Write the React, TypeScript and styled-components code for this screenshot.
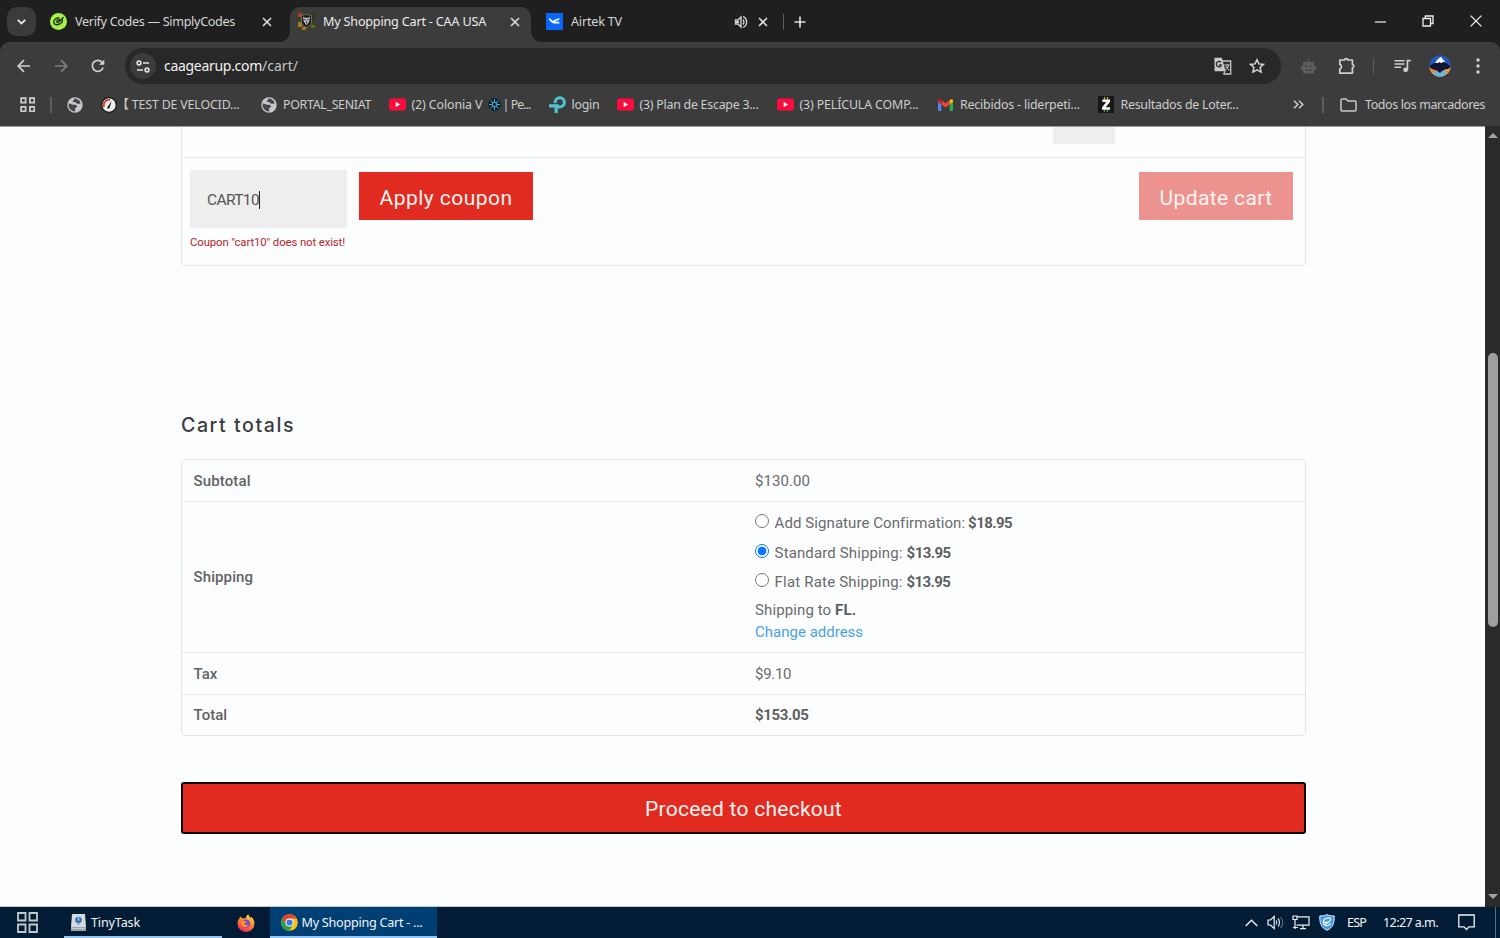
import React, { useLayoutEffect, useRef, useState } from "react";
import styled, { createGlobalStyle, css } from "styled-components";

const ui = `"Noto Sans", "Open Sans", "Noto Sans CJK JP", sans-serif`;
const body = `Roboto, "Liberation Sans", sans-serif`;

const GlobalStyle = createGlobalStyle`
  * { box-sizing: border-box; }
  body { margin: 0; background: #1f1f1f; overflow: hidden; }
  svg { display: block; flex: none; }
`;

const Screen = styled.div`
  width: 1500px;
  height: 938px;
  display: flex;
  flex-direction: column;
  overflow: hidden;
  font-family: ${ui};
  font-size: 13px;
  color: #dedede;
`;

/* Text tracked to fill a given width */
const Tracked = styled.span<{ $w: number }>`
  display: block;
  flex: none;
  width: ${(p) => p.$w}px;
  white-space: pre;
`;

function Fit({ w, children }: { w: number; children: string }) {
  const ref = useRef<HTMLSpanElement>(null);
  const [spacing, setSpacing] = useState(0);
  useLayoutEffect(() => {
    if (!ref.current) return;
    const natural = ref.current.getBoundingClientRect().width;
    setSpacing((w - natural) / children.length);
  }, [w, children]);
  return (
    <Tracked $w={w} style={{ letterSpacing: spacing }}>
      <span ref={ref}>{children}</span>
    </Tracked>
  );
}

/* ---------- Tab strip ---------- */
const TabStrip = styled.header`
  height: 42px;
  flex: none;
  display: flex;
  align-items: flex-end;
  background: #1f1f1f;
`;
const TabSearch = styled.button`
  width: 29px;
  height: 29px;
  margin: 0 6px 6px 7px;
  padding: 0;
  border: 0;
  border-radius: 10px;
  background: #3b3b3b;
  display: grid;
  place-items: center;
`;
const Tab = styled.div<{ $w: number; $left: number; $right: number; $active?: boolean }>`
  width: ${(p) => p.$w}px;
  height: 35px;
  flex: none;
  display: flex;
  align-items: center;
  padding: 0 ${(p) => p.$right}px 6px ${(p) => p.$left}px;
  gap: 8px;
  font-size: 12.6px;
  color: #d6d6d6;
  position: relative;
  ${(p) =>
    p.$active &&
    css`
      background: #3c3c3c;
      color: #ececec;
      border-radius: 10px 10px 0 0;
      &::before,
      &::after {
        content: "";
        position: absolute;
        bottom: 0;
        width: 10px;
        height: 10px;
      }
      &::before {
        left: -10px;
        background: radial-gradient(circle at 0 0, #1f1f1f 9.5px, #3c3c3c 10px);
      }
      &::after {
        right: -10px;
        background: radial-gradient(circle at 100% 0, #1f1f1f 9.5px, #3c3c3c 10px);
      }
    `}
`;
const Push = styled.span`
  flex: 1;
`;
const Divider = styled.span<{ $h: number }>`
  width: 1.5px;
  height: ${(p) => p.$h}px;
  background: #5d5d5d;
  flex: none;
`;
const NewTab = styled.div`
  display: flex;
  align-items: center;
  gap: 10px;
  height: 35px;
  padding: 0 0 6px 1.5px;
`;
const WindowControls = styled.div`
  margin-left: auto;
  align-self: stretch;
  display: flex;
`;
const Cell = styled.span<{ $w: number }>`
  width: ${(p) => p.$w}px;
  flex: none;
  display: grid;
  place-items: center;
`;

/* ---------- Toolbar ---------- */
const ToolbarBack = styled.div`
  background: #1f1f1f;
  flex: none;
`;
const Toolbar = styled.div`
  height: 42px;
  background: #3c3c3c;
  border-radius: 9px 9px 0 0;
  display: flex;
  align-items: center;
  padding: 6px 0 0 4px;
`;
const Omnibox = styled.div`
  width: 1156px;
  height: 36px;
  flex: none;
  margin: 0 8px;
  border-radius: 18px;
  background: #282828;
  display: flex;
  align-items: center;
  padding: 0 7px 0 5px;
  font-size: 14px;
  color: #f1f1f1;
`;
const SiteInfo = styled.span`
  width: 26px;
  height: 26px;
  border-radius: 50%;
  background: #3c3c3c;
  display: grid;
  place-items: center;
  margin-right: 8px;
`;
const Address = styled.span`
  display: flex;
  padding-bottom: 1px;
`;
const Dim = styled.span`
  color: #c4c4c4;
`;

/* ---------- Bookmarks ---------- */
const BookmarksBar = styled.nav`
  height: 42px;
  flex: none;
  display: flex;
  align-items: center;
  background: #3c3c3c;
  font-size: 12.4px;
  color: #cdcdcd;
  padding: 0 0 1px 19.5px;
`;
const Launcher = styled.span`
  width: 47.5px;
  flex: none;
  display: flex;
  align-items: center;
  gap: 15px;
`;
const Bookmark = styled.a<{ $w: number; $gap?: number }>`
  width: ${(p) => p.$w}px;
  flex: none;
  display: flex;
  align-items: center;
  gap: ${(p) => p.$gap ?? 6}px;
  line-height: 18px;
`;
const Split = styled.span`
  display: flex;
  align-items: center;
  gap: 2px;
`;

/* ---------- Page ---------- */
const Viewport = styled.div`
  height: 781px;
  flex: none;
  display: flex;
  background: #fcfdfe;
`;
const Page = styled.main`
  width: 1485px;
  height: 781px;
  padding-left: 181px;
  border-top: 1px solid #9c9c9c;
  border-bottom: 1px solid #c3c8cd;
  font-family: ${body};
  font-size: 15px;
  color: #6b6b6b;
`;
const CartTable = styled.section`
  width: 1125px;
  height: 139px;
  border: 1px solid #e3e4e7;
  border-top: 0;
  border-radius: 0 0 5px 5px;
`;
const ItemRow = styled.div`
  height: 31px;
  border-bottom: 1px solid #e5e6e8;
  padding: 0 0 0 870.5px;
`;
const Quantity = styled.div`
  width: 62.5px;
  height: 17px;
  background: #eeeeee;
`;
const CouponRow = styled.div`
  display: flex;
  align-items: flex-start;
  padding: 12px 12px 0 8px;
`;
const CouponField = styled.div`
  width: 157px;
  font-size: 11.4px;
  color: #b5262b;
`;
const CouponInput = styled.div`
  width: 156.5px;
  height: 58px;
  margin-bottom: 7px;
  padding: 1px 0 0 17px;
  display: flex;
  align-items: center;
  background: #eeeeee;
  font-size: 15.5px;
  color: #555;
`;
const Caret = styled.i`
  width: 1px;
  height: 18px;
  background: #222;
`;
const Button = styled.button<{ $w: number; $faded?: boolean }>`
  width: ${(p) => p.$w}px;
  height: 48px;
  flex: none;
  margin: 2px 0 0 12px;
  padding: 3px 0 0;
  border: 0;
  display: flex;
  align-items: center;
  justify-content: center;
  font-family: ${body};
  font-size: 21px;
  color: #fff3f0;
  background: ${(p) => (p.$faded ? "#ed938f" : "#e22b20")};
`;
const Title = styled.h2`
  margin: 146px 0 0;
  height: 47px;
  line-height: 26px;
  font-family: Inter, ${body};
  font-size: 19.6px;
  font-weight: 500;
  color: #3c3c3f;
`;
const Totals = styled.section`
  width: 1125px;
  height: 277px;
  border: 1px solid #e3e4e7;
  border-radius: 5px;
`;
const TotalsRow = styled.div<{ $h: number }>`
  height: ${(p) => p.$h}px;
  display: grid;
  grid-template-columns: 561.5px 1fr;
  align-items: center;
  padding: 0 0 0 11.6px;
  & + & {
    border-top: 1px solid #e6e7ea;
  }
`;
const Label = styled.div`
  font-weight: 500;
  color: #636363;
`;
const Strong = styled.b`
  font-weight: 700;
  color: #5f5f5f;
`;
const Methods = styled.div`
  display: flex;
  flex-direction: column;
  margin-bottom: 2px;
`;
const Method = styled.label`
  height: 29.2px;
  display: flex;
  align-items: center;
`;
const Radio = styled.span<{ $on?: boolean }>`
  width: 14px;
  height: 14px;
  margin: 0 5.5px 4px 0;
  flex: none;
  border-radius: 50%;
  border: 1px solid ${(p) => (p.$on ? "#0a75ff" : "#767676")};
  background: ${(p) => (p.$on ? "radial-gradient(circle, #0a75ff 4px, #fff 4.7px)" : "#fff")};
`;
const Destination = styled.div`
  margin-top: 3px;
`;
const Line = styled.div<{ $link?: boolean }>`
  height: 22px;
  display: flex;
  align-items: center;
  color: ${(p) => (p.$link ? "#4aa3df" : "inherit")};
`;
const Checkout = styled.button`
  width: 1125px;
  height: 52px;
  margin-top: 46px;
  padding: 1px 0 0;
  border: 2px solid #0c0505;
  border-radius: 3px;
  background: #e22b20;
  display: flex;
  align-items: center;
  justify-content: center;
  font-family: ${body};
  font-size: 21px;
  color: #fff3f0;
`;
const Scrollbar = styled.aside`
  width: 15px;
  background: #2b2b2b;
  display: flex;
  flex-direction: column;
  align-items: center;
  padding: 7px 0 8px 0;
`;
const Thumb = styled.div`
  width: 10px;
  height: 274px;
  margin: 215px 0 auto;
  border-radius: 5px;
  background: #9f9f9f;
`;

/* ---------- Taskbar ---------- */
const Taskbar = styled.footer`
  height: 31px;
  flex: none;
  display: flex;
  align-items: center;
  background: #021c35;
  color: #f2f5f8;
  font-size: 12.6px;
`;
const TaskItem = styled.div<{ $w: number; $active?: boolean }>`
  width: ${(p) => p.$w}px;
  height: 31px;
  flex: none;
  display: flex;
  align-items: center;
  gap: ${(p) => (p.$active ? 4 : 5)}px;
  padding: 2px 0 0 ${(p) => (p.$active ? 10.5 : 7)}px;
  background: ${(p) => (p.$active ? "#003f74" : "transparent")};
  border-bottom: 2px solid #93c6f0;
`;
const Tray = styled.div`
  margin-left: auto;
  height: 31px;
  display: flex;
  align-items: center;
`;
const ShowDesktop = styled.span`
  width: 5px;
  height: 31px;
  border-left: 1px solid #5b6d80;
`;

/* ---------- Icons ---------- */
const stroke = (c: string, w = 1.7) => ({ fill: "none", stroke: c, strokeWidth: w });

const Close = () => (
  <svg width="10" height="10" viewBox="0 0 10 10" {...stroke("#dcdcdc", 1.6)}><path d="M1 1l8 8M9 1L1 9" /></svg>
);
const SimplyIcon = () => (
  <svg width="17" height="17" viewBox="0 0 17 17">
    <circle cx="8.5" cy="8.5" r="8.5" fill="#a6f04e" />
    <path d="M9.6 5.100C6.500 4.500 3.600 6.700 3.700 9.200c.1 2.500 3.300 3.100 5.700 1.900 2.300-1.100 3.400-3.200 2.700-4.900M6.300 8.500l1.700 1.300 5.600-5.600M6.300 8.500c1-1.300 2.500-1.900 4-1.600" {...stroke("#1d3512", 1.4)} />
  </svg>
);
const ShieldIcon = () => (
  <svg width="17" height="17" viewBox="0 0 17 17">
    <path fill="#38401f" d="M0 0h17v17H0z" />
    <path fill="#b23a24" d="M0 0h4v4H0z" /><path fill="#a97424" d="M0 9h4v5H0zM4 14h4v3H4z" />
    <path fill="#253a1c" d="M12 1h5v5h-5z" /><path fill="#5b6830" d="M13 12h4v3h-4z" />
    <path d="M3.500 2.500l5-1 5 1v5.600c0 3-2 5.100-5 6.400-3-1.300-5-3.400-5-6.400z" fill="#17191b" stroke="#7d817c" strokeWidth=".8" />
    <path d="M5 3.500l2 1.300h3l2-1.300-.7 5-2.800 4-2.800-4z" fill="#b9bdbd" />
    <path d="M6.400 6.300l1.500.8M10.600 6.300l-1.500.8M8.500 8.300v2" {...stroke("#25282a", 1)} />
  </svg>
);
const AirtekIcon = () => (
  <svg width="17" height="17" viewBox="0 0 17 17">
    <path fill="#0867fa" d="M0 0h17v17H0z" />
    <path d="M3.300 5.700c1.700 1 2.200 3.600 4.500 3.900h5.500M6.500 8.700l6.800-2.900" {...stroke("#fff", 1.7)} />
  </svg>
);
const Speaker = () => (
  <svg width="14" height="14" viewBox="0 0 14 14">
    <path d="M1.500 5h2.500l3-3v10L4 9H1.500z" {...stroke("#cfcfcf", 1.4)} />
    <path d="M2 6h3v2H2z" fill="#cfcfcf" />
    <path d="M8.800 4.600c1.500 1 1.500 3.800 0 4.800M9 1.700c4.800 1.500 4.800 9.100 0 10.600" {...stroke("#cfcfcf", 1.4)} />
  </svg>
);
const Arrow = ({ c, flip }: { c: string; flip?: boolean }) => (
  <svg width="14" height="14" viewBox="0 0 14 14" {...stroke(c, 1.7)}>
    <path d={flip ? "M1 7h11.500M7 1.200L12.800 7 7 12.800" : "M13 7H1.500M7 1.200L1.200 7 7 12.800"} />
  </svg>
);
const Reload = () => (
  <svg width="14" height="14" viewBox="0 0 14 14">
    <path d="M12.100 8.500A5.500 5.500 0 1 1 11 3.200l1 1" {...stroke("#d0d0d0", 1.7)} />
    <path d="M13.300.5v5.300H8z" fill="#d0d0d0" />
  </svg>
);
const Tune = () => (
  <svg width="14" height="13" viewBox="0 0 14 13" {...stroke("#e0e0e0", 1.6)}>
    <circle cx="3" cy="3" r="1.900" /><path d="M7 3h6M1 10h6" /><circle cx="11" cy="10" r="1.900" />
  </svg>
);
const Translate = () => (
  <svg width="18" height="18" viewBox="0 0 18 18">
    <path d="M7.500 4h9.200v13H9.500" {...stroke("#c9c9c9", 1.3)} />
    <path d="M.5.800h7.300l3.900 13.400H.5z" fill="#c9c9c9" />
    <path d="M7 5.300a2.700 2.700 0 1 0 .2 3.500v-1H4.900" {...stroke("#282828", 1.3)} />
    <path d="M10.300 8h5.400M13 6.700V8M14.800 8c-.4 2-2 3.800-3.300 4.700M11.700 9.500l3.700 3.800M9.500 17l1.900-3" {...stroke("#c9c9c9", 1.1)} />
  </svg>
);
const Star = () => (
  <svg width="16" height="16" viewBox="0 0 16 16" {...stroke("#d4d4d4", 1.5)}>
    <path d="M8 1.700l1.900 4.200 4.600.5-3.400 3.100 1 4.600L8 11.800l-4.100 2.300 1-4.600L1.500 6.400l4.600-.5z" />
  </svg>
);
const Robot = () => (
  <svg width="17" height="17" viewBox="0 0 18 17">
    <path d="M8.300 0h1.400v3.500h3.500a1.800 1.800 0 0 1 1.700 1.800v2.500a2.600 2.600 0 0 1 1.900 4.200l-1.900.8v1.700a1.500 1.500 0 0 1-1.500 1.500H4.600a1.500 1.500 0 0 1-1.500-1.500v-1.700L1.200 12a2.600 2.600 0 0 1 1.900-4.200V5.300a1.800 1.800 0 0 1 1.700-1.800h3.500z" fill="#5d5d5d" />
    <path d="M5.500 7.300h1.800v1.800H5.500zM10.700 7.300h1.800v1.800h-1.800zM6 12h6v1.300H6z" fill="#424242" />
  </svg>
);
const Puzzle = () => (
  <svg width="18" height="18" viewBox="0 0 18 18" {...stroke("#cfcfcf", 1.7)} strokeLinejoin="round">
    <path d="M1.800 3h4.900c0-1.900 3.100-1.900 3.100 0h4.600v4.600c1.900 0 1.900 3.200 0 3.200v5.400H1.800v-4.300c2.200-.6 2.200-3.900 0-4.500z" />
  </svg>
);
const Queue = () => (
  <svg width="17" height="14" viewBox="0 0 17 14">
    <path d="M.500 1.700h10M.500 5h10M.500 8.300h6.500" {...stroke("#cfcfcf", 1.5)} />
    <path d="M12.700 1.700h4M13.400 1v10" {...stroke("#cfcfcf", 1.7)} /><circle cx="11.600" cy="10.800" r="2.400" fill="#cfcfcf" />
  </svg>
);
const Avatar = () => (
  <svg width="22" height="22" viewBox="0 0 22 22">
    <defs><clipPath id="avatar"><circle cx="11" cy="11" r="10.700" /></clipPath></defs>
    <g clipPath="url(#avatar)">
      <path fill="#2259bd" d="M0 0h22v22H0z" /><path fill="#eda550" d="M0 12h22v10H0z" />
      <path fill="#6bb4da" d="M5 17l5-2 6 1 2 6H3z" />
      <path fill="#111634" d="M0 11.500L5 8l6-2 6 1.500 5 4.500-3 2-3 .5-3 1.500-2 2-4-3-3 .5z" />
      <path fill="#fff" d="M5.500 8L10 3l2-1 4.500 5.500-2.500-.7-1.500 1.400-2-1.300L8.500 8.300 7 7.500z" />
      <path fill="#e8843d" d="M0 15l4-1 4 2.500-3 1.500zM16 17l5-2v3z" />
    </g>
  </svg>
);
const Dots = () => (
  <svg width="4" height="16" viewBox="0 0 4 16" fill="#d2d2d2"><circle cx="2" cy="2" r="1.700" /><circle cx="2" cy="8" r="1.700" /><circle cx="2" cy="14" r="1.700" /></svg>
);
const Apps = () => (
  <svg width="15.500" height="15.500" viewBox="0 0 16 16" {...stroke("#cdcdcd", 1.8)}><path d="M1.200 1.200h4.600v4.600H1.200zM10.200 1.200h4.600v4.600h-4.600zM1.200 10.200h4.600v4.600H1.200zM10.200 10.200h4.600v4.600h-4.600z" /></svg>
);
const StartGrid = () => (
  <svg width="21" height="21" viewBox="0 0 21 21" {...stroke("#c3c8cd", 1.8)}><path d="M1 1h7.500v7.500H1zM12.500 1H20v7.500h-7.500zM1 12.500h7.500V20H1zM12.500 12.500H20V20h-7.500z" /></svg>
);
const Globe = () => (
  <svg width="16" height="16" viewBox="0 0 16 16">
    <circle cx="8" cy="8" r="7.700" fill="#c5c7cb" />
    <path d="M2 6.200l3.700 1.600h3l1.600 1.700-2.200 1.700v3.200C4.400 14.400 1.600 11.400 1.600 8zM7 1.600c.2 1.300-.3 2.200-1.600 2.700 1.200 1.500 3 .4 3.900 1.600 1 1.400 2.600.8 4.400.3C12.700 3.100 10 1.500 7 1.600z" fill="#44464a" />
  </svg>
);
const Gauge = () => (
  <svg width="16" height="16" viewBox="0 0 16 16">
    <circle cx="8" cy="8" r="7.300" fill="#eee" stroke="#171717" strokeWidth="1.300" />
    <path d="M3 10A5.200 5.200 0 0 1 9 3.100" {...stroke("#d63834", 1.8)} /><path d="M5.800 11.200l4.900-7.400-2.400 7.800z" fill="#151515" />
  </svg>
);
const Tube = () => (
  <svg width="17" height="13" viewBox="0 0 17 13"><rect y=".5" width="17" height="12" rx="2.500" fill="#fb0c3c" /><path d="M6.700 4l4.500 2.500L6.700 9z" fill="#fff" /></svg>
);
const Flake = () => (
  <svg width="13" height="13" viewBox="0 0 13 13">
    <circle cx="6.500" cy="6.500" r="6.500" fill="#102532" />
    <path d="M6.500 1v11M1 6.500h11M2.600 2.600l7.800 7.800M10.400 2.600l-7.800 7.800" {...stroke("#54bfd5", 0.9)} />
    <circle cx="6.500" cy="6.500" r="2.200" fill="#102532" stroke="#54bfd5" strokeWidth=".9" />
  </svg>
);
const TpLink = () => (
  <svg width="17" height="17" viewBox="0 0 17 17">
    <path d="M6.200 7V6.300a4.600 4.600 0 1 1 4.700 4.600H9" {...stroke("#4fc3d3", 3)} />
    <path d="M0 8.300h9.800v3.200h-1V17H5.600v-5.500H0z" fill="#4fc3d3" />
  </svg>
);
const Gmail = () => (
  <svg width="15" height="12" viewBox="0 0 15 12">
    <path fill="#4a86ee" d="M0 2l3.400 2.500V12H1a1 1 0 0 1-1-1z" /><path fill="#35a853" d="M15 2l-3.400 2.500V12H14a1 1 0 0 0 1-1z" />
    <path fill="#ea4335" d="M3.400 1.200l4.100 3.100 4.100-3.100v4.400L7.500 8.700 3.400 5.600z" />
    <path fill="#c5221f" d="M0 1.700C0 .2 1.700-.3 3.400 1.200v4.400L0 3.100z" /><path fill="#fbbc04" d="M15 1.700c0-1.500-1.700-2-3.400-.5v4.400L15 3.100z" />
  </svg>
);
const Lottery = () => (
  <svg width="16" height="17" viewBox="0 0 16 17">
    <path fill="#161816" d="M0 0h16v17H0z" /><path d="M6.500 1v3M9.500 1v3" {...stroke("#c6a52c", 1.3)} /><path d="M6.500 13v3M9.500 13v3" {...stroke("#3b9850", 1.3)} />
    <path d="M4.400 3.500h7.700v2.200L7.800 11.200h4.300v2.600H4v-2.200l4.200-5.500H4.400z" fill="#f5f5f5" />
  </svg>
);
const Folder = () => (
  <svg width="17" height="14" viewBox="0 0 17 14" {...stroke("#c8c8c8", 1.5)} strokeLinejoin="round"><path d="M1 2a1 1 0 0 1 1-1h4l2 2h7a1 1 0 0 1 1 1v8a1 1 0 0 1-1 1H2a1 1 0 0 1-1-1z" /></svg>
);
const Chevrons = () => (
  <svg width="11" height="9" viewBox="0 0 11 9" {...stroke("#cfcfcf", 1.5)}><path d="M1 .700L4.800 4.500 1 8.300M6 .700l3.800 3.800L6 8.300" /></svg>
);
const TinyIcon = () => (
  <svg width="15" height="17" viewBox="0 0 15 17">
    <path fill="#d7dadd" d="M1 0h13l1 13v4H0v-4z" /><path fill="#9fa5ac" d="M0 13h15v4H0z" /><path fill="#c8ccd0" d="M1 14h13v1H1z" />
    <circle cx="7.500" cy="6" r="3.300" fill="#2b77bd" /><path d="M7.500 3.200v3.500" {...stroke("#a9dcf5", 1.3)} /><path d="M6 10h3" {...stroke("#8e969d", 1)} />
  </svg>
);
const Firefox = () => (
  <svg width="18" height="18" viewBox="0 0 18 18">
    <defs><linearGradient id="fox" x1=".8" y1="0" x2=".3" y2="1"><stop stopColor="#ffe14b" /><stop offset=".45" stopColor="#ff8a2a" /><stop offset="1" stopColor="#f3265f" /></linearGradient></defs>
    <path d="M3.500 2.500l2 2c1.300-.5 2.300-.4 3.300-.2C9 2.500 10 1 11.400.3c.2 1.800 1.400 2.500 2.300 3.600l.6-1.200c2.200 2 3.200 4.400 3.200 6.800a8.500 8.500 0 0 1-17 0c0-2 .6-3.700 1.900-5.100 0-.9.4-1.500 1.100-1.900z" fill="url(#fox)" />
    <circle cx="9" cy="9.500" r="4" fill="#7250c9" /><path d="M4.500 7c2-.7 3 .7 5.200.8-.3 1.400-2.300 1.300-2.700 2 .5 1.500 2.800 1.600 4.200.6-1 3.600-6.200 3.200-6.700-.5z" fill="#ff9b28" />
  </svg>
);
const Chrome = () => (
  <svg width="17" height="17" viewBox="0 0 18 18">
    <circle cx="9" cy="9" r="8.800" fill="#fbc116" /><path d="M1.400 4.600A8.800 8.800 0 0 1 16.600 4.700H9L5.300 11.200z" fill="#e34133" />
    <path d="M1.400 4.600L5.300 11.200 9 13.200l3.600-2L8.900 17.800A8.800 8.800 0 0 1 1.400 4.600z" fill="#2da04b" />
    <circle cx="9" cy="9" r="4.300" fill="#fff" /><circle cx="9" cy="9" r="3.300" fill="#3779e8" />
  </svg>
);
const Volume = () => (
  <svg width="18" height="15" viewBox="0 0 18 15">
    <path d="M1 5h2.500l3.700-3.500v12L3.500 10H1z" {...stroke("#eef2f5", 1.2)} /><path d="M9 5.500c1 1 1 3 0 4M11 3.500c2 2.200 2 5.800 0 8" {...stroke("#d5dce2", 1.2)} /><path d="M13.500 2c2.900 3.300 2.900 7.700 0 11" {...stroke("#607286", 1.1)} />
  </svg>
);
const Network = () => (
  <svg width="18" height="15" viewBox="0 0 18 15" {...stroke("#eef2f5", 1.2)}><path d="M5.500 1.800H17v8.400H4.500M1 1h4v3.500H1zM3 4.500V14M1 12.500h5M8 13.700h6M11 10.200v3.500" /></svg>
);
const ShieldBlue = () => (
  <svg width="16" height="17" viewBox="0 0 16 17">
    <path d="M8 .6C5.700 1.800 3.300 2 .8 1.900c-.2 6.600 1 11.700 7.200 14.400 6.200-2.700 7.400-7.800 7.200-14.400C12.700 2 10.300 1.800 8 .6z" fill="#3e99e7" stroke="#d9efff" strokeWidth="1" />
    <path d="M12 5.200C9.500 2.800 4.500 4.200 4.300 7.900c-.1 3.600 4.800 5.200 7.400 1.800M4.500 8.300h5l2.500-3M6 10.900L9.300 8" {...stroke("#fff", 1.2)} />
  </svg>
);
const Notifications = () => (
  <svg width="17" height="17" viewBox="0 0 17 17" {...stroke("#eef2f5", 1.3)}><path d="M.800 1h15.400v11.800H11L8.500 15.500 6 12.800H.800z" /></svg>
);
const Triangle = ({ down }: { down?: boolean }) => (
  <svg width="10" height="5" viewBox="0 0 10 5" fill="#a2a2a2"><path d={down ? "M0 0h10L5 5z" : "M0 5h10L5 0z"} /></svg>
);

const methods = [
  { name: "Add Signature Confirmation:", w: 190, gap: 3.5, price: "$18.95", pw: 44 },
  { name: "Standard Shipping:", w: 128, gap: 4, price: "$13.95", pw: 44, on: true },
  { name: "Flat Rate Shipping:", w: 128, gap: 4, price: "$13.95", pw: 43.5 },
];

export default function App() {
  return (
    <Screen>
      <GlobalStyle />
      <TabStrip>
        <TabSearch>
          <svg width="9" height="6" viewBox="0 0 9 6" {...stroke("#e6e6e6", 1.9)}><path d="M.800.800L4.500 4.500 8.200.800" /></svg>
        </TabSearch>
        <Tab $w={248} $left={8} $right={18}>
          <SimplyIcon />
          <Fit w={160}>Verify Codes — SimplyCodes</Fit>
          <Push />
          <Close />
        </Tab>
        <Tab $w={241} $left={8} $right={11} $active>
          <ShieldIcon />
          <Fit w={163}>My Shopping Cart - CAA USA</Fit>
          <Push />
          <Close />
        </Tab>
        <Tab $w={250} $left={15} $right={13}>
          <AirtekIcon />
          <Fit w={51}>Airtek TV</Fit>
          <Push />
          <Cell $w={19}><Speaker /></Cell>
          <Close />
        </Tab>
        <NewTab>
          <Divider $h={16} />
          <svg width="12" height="12" viewBox="0 0 12 12" {...stroke("#dcdcdc", 1.7)}><path d="M6 .500v11M.500 6h11" /></svg>
        </NewTab>
        <WindowControls>
          <Cell $w={48}><svg width="11" height="11" viewBox="0 0 11 11" {...stroke("#f0f0f0", 1.2)}><path d="M0 6h11" /></svg></Cell>
          <Cell $w={48}><svg width="12" height="12" viewBox="0 0 12 12" {...stroke("#f0f0f0", 1.3)}><path d="M1 3.500h7.500V11H1zM3.300 3.300V1H11v7.500H8.700" /></svg></Cell>
          <Cell $w={48}><svg width="12" height="12" viewBox="0 0 12 12" {...stroke("#f0f0f0", 1.3)}><path d="M.600.600l10.800 10.800M11.400.600L.600 11.400" /></svg></Cell>
        </WindowControls>
      </TabStrip>

      <ToolbarBack>
        <Toolbar>
          <Cell $w={39}><Arrow c="#d0d0d0" /></Cell>
          <Cell $w={36}><Arrow c="#7d7d7d" flip /></Cell>
          <Cell $w={38}><Reload /></Cell>
          <Omnibox>
            <SiteInfo><Tune /></SiteInfo>
            <Address>
              <Fit w={98}>caagearup.com</Fit>
              <Dim><Fit w={36}>/cart/</Fit></Dim>
            </Address>
            <Push />
            <Cell $w={34}><Translate /></Cell>
            <Cell $w={34}><Star /></Cell>
          </Omnibox>
          <Cell $w={39}><Robot /></Cell>
          <Cell $w={38}><Puzzle /></Cell>
          <Cell $w={15}><Divider $h={16} /></Cell>
          <Cell $w={43}><Queue /></Cell>
          <Cell $w={32}><Avatar /></Cell>
          <Cell $w={43}><Dots /></Cell>
        </Toolbar>
      </ToolbarBack>

      <BookmarksBar>
        <Launcher><Apps /><Divider $h={16} /></Launcher>
        <Bookmark $w={33.5}><Globe /></Bookmark>
        <Bookmark $w={160.500} $gap={0}><Gauge /><Fit w={123}>【 TEST DE VELOCID...</Fit></Bookmark>
        <Bookmark $w={127.500}><Globe /><Fit w={88}>PORTAL_SENIAT</Fit></Bookmark>
        <Bookmark $w={160}>
          <Tube />
          <Split><Fit w={74}>(2) Colonia V </Fit><Flake /><Fit w={28}>| Pe...</Fit></Split>
        </Bookmark>
        <Bookmark $w={68}><TpLink /><Fit w={28}>login</Fit></Bookmark>
        <Bookmark $w={160}><Tube /><Fit w={119}>(3) Plan de Escape 3...</Fit></Bookmark>
        <Bookmark $w={161.500}><Tube /><Fit w={119}>(3) PELÍCULA COMP...</Fit></Bookmark>
        <Bookmark $w={159.500} $gap={7}><Gmail /><Fit w={120}>Recibidos - liderpeti...</Fit></Bookmark>
        <Bookmark $w={195.500} $gap={7}><Lottery /><Fit w={118}>Resultados de Loter...</Fit></Bookmark>
        <Bookmark $w={29}><Chevrons /></Bookmark>
        <Bookmark $w={18}><Divider $h={16} /></Bookmark>
        <Bookmark $w={145} $gap={8}><Folder /><Fit w={120}>Todos los marcadores</Fit></Bookmark>
      </BookmarksBar>

      <Viewport>
        <Page>
          <CartTable>
            <ItemRow><Quantity /></ItemRow>
            <CouponRow>
              <CouponField>
                <CouponInput><Fit w={52}>CART10</Fit><Caret /></CouponInput>
                <Fit w={155}>{'Coupon "cart10" does not exist!'}</Fit>
              </CouponField>
              <Button $w={174}><Fit w={133}>Apply coupon</Fit></Button>
              <Push />
              <Button $w={154} $faded><Fit w={113}>Update cart</Fit></Button>
            </CouponRow>
          </CartTable>

          <Title><Fit w={114}>Cart totals</Fit></Title>
          <Totals>
            <TotalsRow $h={41}>
              <Label><Fit w={57}>Subtotal</Fit></Label>
              <Fit w={55}>$130.00</Fit>
            </TotalsRow>
            <TotalsRow $h={151}>
              <Label><Fit w={59.500}>Shipping</Fit></Label>
              <Methods>
                {methods.map((m) => (
                  <Method key={m.name}>
                    <Radio $on={m.on} />
                    <Fit w={m.w}>{m.name}</Fit>
                    <Cell $w={m.gap} />
                    <Strong><Fit w={m.pw}>{m.price}</Fit></Strong>
                  </Method>
                ))}
                <Destination>
                  <Line><Fit w={80}>Shipping to </Fit><Strong><Fit w={21}>FL.</Fit></Strong></Line>
                  <Line $link><Fit w={108}>Change address</Fit></Line>
                </Destination>
              </Methods>
            </TotalsRow>
            <TotalsRow $h={42}>
              <Label><Fit w={23.500}>Tax</Fit></Label>
              <Fit w={36}>$9.10</Fit>
            </TotalsRow>
            <TotalsRow $h={41}>
              <Label><Fit w={33.500}>Total</Fit></Label>
              <Strong><Fit w={53.500}>$153.05</Fit></Strong>
            </TotalsRow>
          </Totals>
          <Checkout><Fit w={197}>Proceed to checkout</Fit></Checkout>
        </Page>
        <Scrollbar>
          <Triangle />
          <Thumb />
          <Triangle down />
        </Scrollbar>
      </Viewport>

      <Taskbar>
        <Cell $w={55}><StartGrid /></Cell>
        <Cell $w={9} />
        <TaskItem $w={158}><TinyIcon /><Fit w={49}>TinyTask</Fit></TaskItem>
        <Cell $w={48}><Cell $w={44}><Firefox /></Cell></Cell>
        <TaskItem $w={167} $active><Chrome /><Fit w={121}>My Shopping Cart - ...</Fit></TaskItem>
        <Tray>
          <Cell $w={25}><svg width="13" height="8" viewBox="0 0 13 8" {...stroke("#eef2f5", 1.4)}><path d="M.700 7l5.800-5.800L12.300 7" /></svg></Cell>
          <Cell $w={24}><Volume /></Cell>
          <Cell $w={26}><Network /></Cell>
          <Cell $w={25}><ShieldBlue /></Cell>
          <Cell $w={8} />
          <Fit w={19}>ESP</Fit>
          <Cell $w={17} />
          <Fit w={55}>12:27 a.m.</Fit>
          <Cell $w={57}><Notifications /></Cell>
          <ShowDesktop />
        </Tray>
      </Taskbar>
    </Screen>
  );
}
